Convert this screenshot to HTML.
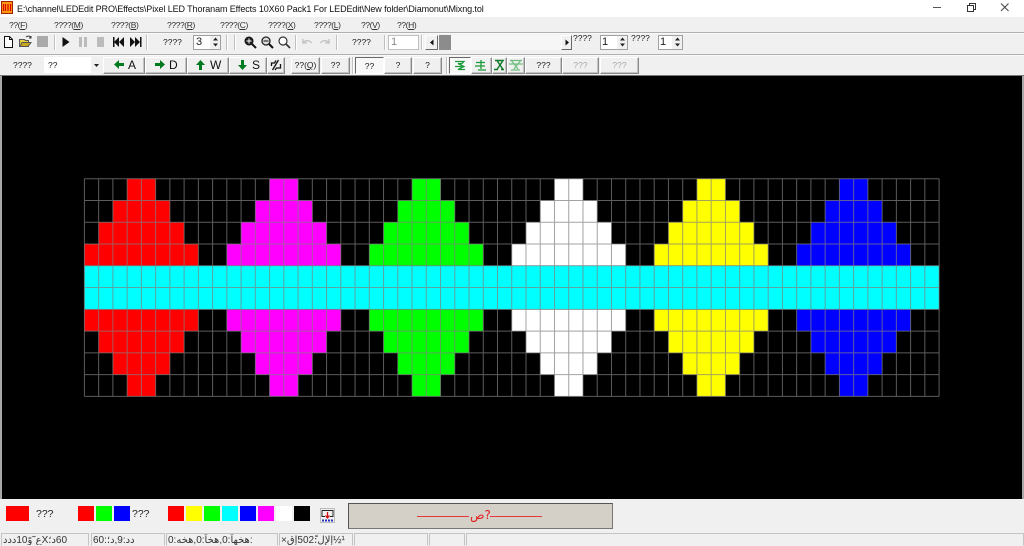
<!DOCTYPE html>
<html><head><meta charset="utf-8">
<style>
html,body{margin:0;padding:0;background:#f0f0f0;width:1024px;height:546px;overflow:hidden}
body{position:relative;font-family:"Liberation Sans","Noto Sans CJK SC",sans-serif;font-size:8.5px;color:#222}
.a,.t,.b,.s,.sw{position:absolute;box-sizing:border-box}
.t{white-space:nowrap;line-height:12px}
.m{letter-spacing:-.4px;color:#333;top:19px}
.b{background:#f0f0f0;border:1px solid;border-color:#fff #8a8a8a #8a8a8a #fff;box-shadow:inset -1px -1px 0 #c4c4c4;text-align:center;white-space:nowrap;line-height:15px;top:57px;height:17px}
.k{text-align:left;font-size:12px;color:#111}
.s{width:1px;background:#c0c0c0;box-shadow:1px 0 0 #fff}
.sw{top:506px;height:15px;width:16px}
.st{position:absolute;top:533px;height:13px;border:1px solid;border-color:#c4c4c4 #c4c4c4 #f0f0f0 #c4c4c4;box-sizing:border-box;font-size:10px;line-height:13px;white-space:nowrap;overflow:hidden;color:#333;padding-left:1px;unicode-bidi:bidi-override;direction:ltr;font-family:"Liberation Sans","DejaVu Sans",sans-serif}
u{text-decoration:underline}
</style></head><body>
<!-- title bar -->
<div class="a" style="left:0;top:0;width:1024px;height:17px;background:#fff"></div>
<div class="t" style="left:17px;top:3px;font-size:9px;letter-spacing:-.1px;color:#111">E:\channel\LEDEdit PRO\Effects\Pixel LED Thoranam Effects 10X60 Pack1 For LEDEdit\New folder\Diamonut\Mixng.tol</div>
<!-- menu -->
<div class="t m" style="left:9px">??(<u>F</u>)</div>
<div class="t m" style="left:54px">????(<u>M</u>)</div>
<div class="t m" style="left:111px">????(<u>B</u>)</div>
<div class="t m" style="left:167px">????(<u>R</u>)</div>
<div class="t m" style="left:220px">????(<u>C</u>)</div>
<div class="t m" style="left:268px">????(<u>X</u>)</div>
<div class="t m" style="left:314px">????(<u>L</u>)</div>
<div class="t m" style="left:361px">??(<u>V</u>)</div>
<div class="t m" style="left:397px">??(<u>H</u>)</div>
<div class="a" style="left:0;top:32px;width:1024px;height:1px;background:#b0b0b0"></div>
<div class="a" style="left:0;top:33px;width:1024px;height:1px;background:#fafafa"></div>
<div class="a" style="left:0;top:54px;width:1024px;height:1px;background:#b0b0b0"></div>
<div class="a" style="left:0;top:55px;width:1024px;height:1px;background:#fafafa"></div>
<!-- toolbar 1 -->
<div class="s" style="left:54px;top:35px;height:15px"></div>
<div class="s" style="left:146px;top:35px;height:15px"></div>
<div class="t" style="left:163px;top:36px">????</div>
<div class="a" style="left:193px;top:35px;width:28px;height:15px;background:#fff;border:1px solid #a0a0a0"></div>
<div class="t" style="left:196px;top:36px;font-size:11px">3</div>
<div class="a" style="left:210px;top:36px;width:10px;height:13px;background:#f0f0f0"></div>
<div class="s" style="left:226px;top:35px;height:15px"></div>
<div class="s" style="left:234px;top:35px;height:15px"></div>
<div class="s" style="left:295px;top:35px;height:15px"></div>
<div class="s" style="left:336px;top:35px;height:15px"></div>
<div class="t" style="left:352px;top:36px">????</div>
<div class="s" style="left:384px;top:35px;height:15px"></div>
<div class="a" style="left:388px;top:35px;width:31px;height:15px;background:#fff;border:1px solid #c0c0c0"></div>
<div class="t" style="left:391px;top:36px;color:#888;font-size:11px">1</div>
<div class="s" style="left:421px;top:35px;height:15px"></div>
<div class="a" style="left:424px;top:35px;width:148px;height:15px;background:#f6f6f6"></div>
<div class="a" style="left:425px;top:35px;width:13px;height:15px;background:#f0f0f0;border:1px solid;border-color:#fff #696969 #696969 #fff"></div>
<div class="a" style="left:439px;top:35px;width:12px;height:15px;background:#8c8c8c"></div>
<div class="a" style="left:561px;top:35px;width:11px;height:15px;background:#f0f0f0;border:1px solid;border-color:#fff #696969 #696969 #fff"></div>
<div class="t" style="left:573px;top:32px">????</div>
<div class="a" style="left:600px;top:35px;width:28px;height:15px;background:#fff;border:1px solid #a0a0a0"></div>
<div class="t" style="left:602px;top:36px;font-size:11px">1</div>
<div class="a" style="left:617px;top:36px;width:10px;height:13px;background:#f0f0f0"></div>
<div class="t" style="left:631px;top:32px">????</div>
<div class="a" style="left:658px;top:35px;width:25px;height:15px;background:#fff;border:1px solid #a0a0a0"></div>
<div class="t" style="left:660px;top:36px;font-size:11px">1</div>
<div class="a" style="left:672px;top:36px;width:10px;height:13px;background:#f0f0f0"></div>
<!-- toolbar 2 -->
<div class="t" style="left:13px;top:59px">????</div>
<div class="a" style="left:44px;top:57px;width:59px;height:16px;background:#fff"></div>
<div class="t" style="left:48px;top:59px">??</div>
<div class="a" style="left:91px;top:57px;width:12px;height:16px;background:#f0f0f0"></div>
<div class="b k" style="left:103px;width:42px;padding-left:24px">A</div>
<div class="b k" style="left:145px;width:42px;padding-left:23px">D</div>
<div class="b k" style="left:187px;width:42px;padding-left:22px">W</div>
<div class="b k" style="left:229px;width:38px;padding-left:22px">S</div>
<div class="b" style="left:267px;width:18px"></div>
<div class="b" style="left:291px;width:29px">??(<u>Q</u>)</div>
<div class="b" style="left:321px;width:29px">??</div>
<div class="s" style="left:352px;top:57px;height:17px"></div>
<div class="a" style="left:355px;top:57px;width:29px;height:17px;background:#f8f8f8;border:1px solid;border-color:#696969 #fff #fff #696969;text-align:center;line-height:17px">??</div>
<div class="b" style="left:384px;width:28px">?</div>
<div class="b" style="left:413px;width:29px">?</div>
<div class="s" style="left:446px;top:57px;height:17px"></div>
<div class="a" style="left:449px;top:57px;width:22px;height:17px;background:#f8f8f8;border:1px solid;border-color:#696969 #fff #fff #696969"></div>
<div class="b" style="left:471px;width:21px"></div>
<div class="b" style="left:492px;width:15px"></div>
<div class="b" style="left:507px;width:18px"></div>
<div class="b" style="left:525px;width:37px">???</div>
<div class="b" style="left:562px;width:37px;color:#a8a8a8">???</div>
<div class="b" style="left:600px;width:39px;color:#a8a8a8">???</div>
<!-- canvas -->
<div class="a" style="left:0;top:75px;width:1024px;height:1px;background:#777"></div>
<div class="a" style="left:2px;top:76px;width:1020px;height:423px;background:#000"></div>
<div class="a" style="left:0;top:76px;width:2px;height:423px;background:#a8a8a8"></div>
<div class="a" style="left:1022px;top:76px;width:2px;height:423px;background:#a8a8a8"></div>
<svg class="a" style="left:0;top:0" width="1024" height="546" viewBox="0 0 1024 546">
<defs>
<path id="d" d="M3 0h2v1h1v1h1v1h1v1H0V3h1V2h1V1h1zM0 6h8v1H7v1H6v1H5v1H3V9H2V8H1V7H0z"/>
</defs>
<g transform="translate(84.4,178.7) scale(14.245,21.77)">
<use href="#d" x="0" fill="#ff0000"/>
<use href="#d" x="10" fill="#ff00ff"/>
<use href="#d" x="20" fill="#00ff00"/>
<use href="#d" x="30" fill="#ffffff"/>
<use href="#d" x="40" fill="#ffff00"/>
<use href="#d" x="50" fill="#0000ff"/>
<rect x="0" y="4" width="60" height="2" fill="#00ffff"/>
<path vector-effect="non-scaling-stroke" stroke="#808080" stroke-opacity=".72" stroke-width="1" fill="none" d="M0 0H60M0 1H60M0 2H60M0 3H60M0 4H60M0 5H60M0 6H60M0 7H60M0 8H60M0 9H60M0 10H60M0 0V10M1 0V10M2 0V10M3 0V10M4 0V10M5 0V10M6 0V10M7 0V10M8 0V10M9 0V10M10 0V10M11 0V10M12 0V10M13 0V10M14 0V10M15 0V10M16 0V10M17 0V10M18 0V10M19 0V10M20 0V10M21 0V10M22 0V10M23 0V10M24 0V10M25 0V10M26 0V10M27 0V10M28 0V10M29 0V10M30 0V10M31 0V10M32 0V10M33 0V10M34 0V10M35 0V10M36 0V10M37 0V10M38 0V10M39 0V10M40 0V10M41 0V10M42 0V10M43 0V10M44 0V10M45 0V10M46 0V10M47 0V10M48 0V10M49 0V10M50 0V10M51 0V10M52 0V10M53 0V10M54 0V10M55 0V10M56 0V10M57 0V10M58 0V10M59 0V10M60 0V10"/>
</g>
<!-- app icon -->
<rect x="1.500" y="1.500" width="11" height="12" fill="#ff9a10" stroke="#a02000"/>
<path d="M3.500 4v7M5.500 4v7M8 4v7M10.500 4v7" stroke="#d80000" stroke-width="1.200"/>
<!-- window controls -->
<path d="M933 7.500H941" stroke="#555" fill="none"/>
<path d="M967.500 5.500h6v6h-6zM969.500 5.500v-2h6v6h-2" stroke="#333" fill="none"/>
<path d="M1001 3.500l7.500 7.500M1008.500 3.500l-7.500 7.500" stroke="#444" fill="none"/>
<!-- new doc -->
<path d="M4.500 36.500h5l3 3v8h-8z" fill="#fff" stroke="#111"/><path d="M9.500 36.500v3h3" fill="none" stroke="#111"/>
<!-- open -->
<path d="M19.500 39.500h5l1 1h3v6h-9z" fill="#e8cf3f" stroke="#555"/><path d="M20 46.500l2-4h9l-3 4z" fill="#c9a820" stroke="#555"/><path d="M26 37c2-1.500 4-1 5 .5M31 36v2h-2" fill="none" stroke="#333"/>
<rect x="37" y="36" width="11" height="11" fill="#a9a9a9"/>
<!-- play etc -->
<path d="M62.500 37l7 5-7 5z" fill="#111"/>
<path d="M79 37h3v10h-3zM84 37h3v10h-3z" fill="#bcbcbc"/>
<rect x="97" y="37" width="7" height="10" fill="#bcbcbc"/>
<path d="M113 37h1.500v10H113zM119 37v10l-5-5zM124 37v10l-5-5z" fill="#111"/>
<path d="M130 37v10l5-5zM135 37v10l5-5zM140 37h1.500v10H140z" fill="#111"/>
<!-- spin arrows -->
<path d="M213 40.500l2.500-3 2.500 3zM213 43.500l2.500 3 2.500-3z" fill="#222"/>
<path d="M620 40.500l2.500-3 2.500 3zM620 43.500l2.500 3 2.500-3z" fill="#222"/>
<path d="M675 40.500l2.500-3 2.500 3zM675 43.500l2.500 3 2.500-3z" fill="#222"/>
<!-- zoom -->
<circle cx="249" cy="41" r="4" fill="#222" stroke="#111"/><path d="M252 44l4 4" stroke="#111" stroke-width="2"/><path d="M246.500 41h5M249 38.500v5" stroke="#fff"/>
<circle cx="266" cy="41" r="4" fill="#ddd" stroke="#222" stroke-width="1.300"/><path d="M269 44l4 4" stroke="#111" stroke-width="2"/><path d="M263.500 41h5" stroke="#111"/>
<circle cx="283" cy="41" r="4" fill="#fff" stroke="#333" stroke-width="1.200"/><path d="M286 44l4 4" stroke="#333" stroke-width="1.600"/>
<!-- undo redo -->
<path d="M303 39v4h4M303.500 42.500c2-2.500 6-2.500 8 .5" fill="none" stroke="#c0c0c0" stroke-width="1.300"/>
<path d="M329 39v4h-4M328.500 42.500c-2-2.500-6-2.500-8 .5" fill="none" stroke="#c0c0c0" stroke-width="1.300"/>
<!-- scroll arrows -->
<path d="M433.500 39.500v6l-3.500-3z" fill="#111"/>
<path d="M565.500 39.500v6l3.500-3z" fill="#111"/>
<path d="M94 64h5l-2.500 3z" fill="#222"/>
<!-- direction arrows -->
<path d="M114 64.500l5-4.500v3h5v3h-5v3z" fill="#007a1e"/>
<path d="M165 64.500l-5-4.500v3h-5v3h5v3z" fill="#007a1e"/>
<path d="M200.500 60l4.500 5h-3v5h-3v-5h-3z" fill="#007a1e"/>
<path d="M242.500 70l-4.500-5h3v-5h3v5h3z" fill="#007a1e"/>
<!-- rotate icon -->
<path d="M272.500 70l6-10M271.500 66v-3h3l1.500-2.500M280.500 64v4h-4l-1.500 2" fill="none" stroke="#111" stroke-width="1.300"/>
<!-- green tool icons -->
<path d="M455 61.500h9l-2 2h-4l6 3-6 3h7M455 66.500h7" fill="none" stroke="#1a9a3a" stroke-width="1.300"/>
<path d="M476 62.500h9M481 60v9M475 66h10M478 70h8" fill="none" stroke="#1a9a3a" stroke-width="1.300"/>
<path d="M495 60.500h8l-6 9M497 60.500l6 9M494 69.500h4M501 69.500h3" fill="none" stroke="#117a2a" stroke-width="1.500"/>
<path d="M510 60.500l12 0M511 60l7 9M521 60l-7 9M509 64h14M511 70h9" fill="none" stroke="#6fbf7f" stroke-width="1.200"/>
<!-- bottom icon -->
<rect x="320.500" y="508.500" width="14" height="14" fill="#f0f0f0" stroke="#bbb"/>
<path d="M322 510.500h11v6h-3M325 516.500h-3v-6" fill="none" stroke="#222"/>
<path d="M327.500 512v5M325.500 515.500l2 2.500 2-2.500" fill="none" stroke="#d01010" stroke-width="1.300"/>
<path d="M322 520.500h11" stroke="#2030c0" stroke-width="2" stroke-dasharray="2 1"/>
</svg>
<!-- bottom -->
<div class="sw" style="left:6px;width:23px;background:#f00"></div>
<div class="t" style="left:36px;top:508px;font-size:10.500px">???</div>
<div class="sw" style="left:78px;background:#f00"></div>
<div class="sw" style="left:96px;background:#0f0"></div>
<div class="sw" style="left:114px;background:#00f"></div>
<div class="t" style="left:132px;top:508px;font-size:10.500px">???</div>
<div class="sw" style="left:168px;background:#f00"></div>
<div class="sw" style="left:186px;background:#ff0"></div>
<div class="sw" style="left:204px;background:#0f0"></div>
<div class="sw" style="left:222px;background:#0ff"></div>
<div class="sw" style="left:240px;background:#00f"></div>
<div class="sw" style="left:258px;background:#f0f"></div>
<div class="sw" style="left:276px;background:#fff"></div>
<div class="sw" style="left:294px;background:#000"></div>
<div class="a" style="left:348px;top:503px;width:265px;height:26px;background:#d4d0c8;border:1px solid #555;border-right-color:#777;border-bottom-color:#777"></div>
<div class="a" style="left:417px;top:516px;width:52px;height:1px;background:#e23a3a"></div>
<div class="a" style="left:490px;top:516px;width:52px;height:1px;background:#e23a3a"></div>
<div class="t" style="left:470px;top:509px;font-size:12px;color:#e02020;font-family:'DejaVu Sans',sans-serif;unicode-bidi:bidi-override;direction:ltr">ص?</div>
<!-- status -->
<div class="st" style="left:1px;width:88px">ددد10وً˜عX؛د60</div>
<div class="st" style="left:91px;width:74px">60:؛د,9:دد</div>
<div class="st" style="left:166px;width:112px">0:هخھ,0:آخھ,0:آهخھ:</div>
<div class="st" style="left:279px;width:74px">×قإ502:ًلإلإ½¹</div>
<div class="st" style="left:354px;width:74px"></div>
<div class="st" style="left:429px;width:36px"></div>
<div class="st" style="left:466px;width:558px"></div>
</body></html>
